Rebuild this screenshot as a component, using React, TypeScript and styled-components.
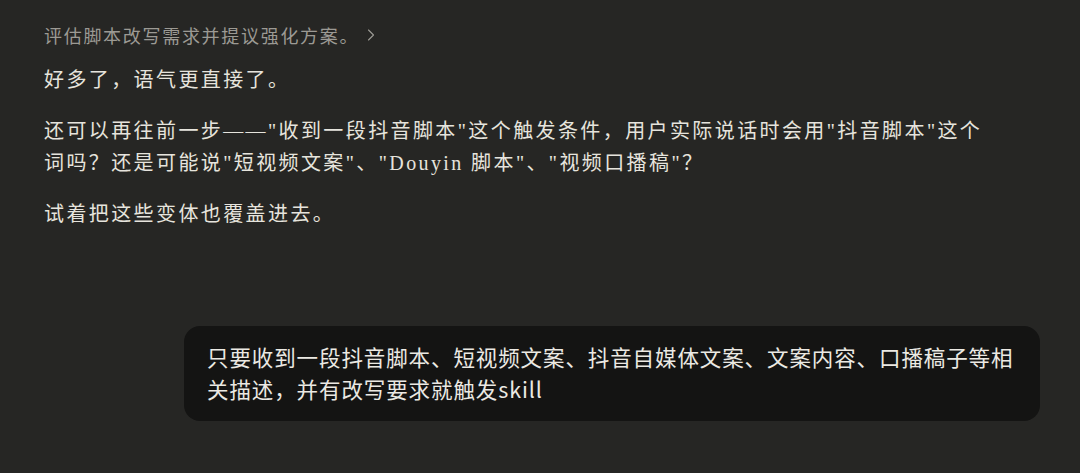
import React from 'react'
import styled, { createGlobalStyle } from 'styled-components'
import { ChevronRight } from 'lucide-react'

const GlobalStyle = createGlobalStyle`
  html, body {
    margin: 0;
    padding: 0;
    background: #262624;
  }
`

const Page = styled.div`
  width: 1080px;
  height: 473px;
  box-sizing: border-box;
  padding: 22px 40px 0 44px;
  display: flex;
  flex-direction: column;
  background: #262624;
  overflow: hidden;
`

const Summary = styled.div`
  display: flex;
  align-items: center;
  height: 26px;
  color: #9c9a94;
  font-family: 'Noto Sans CJK SC', sans-serif;
  font-size: 18px;
  letter-spacing: 1.7px;

  svg {
    flex: none;
    margin-left: 2px;
  }
`

const Reply = styled.div`
  margin-top: 16px;
  width: 944px;
  color: #e6e4dd;
  font-family: 'Liberation Serif', 'Noto Sans CJK SC', serif;
  font-size: 20px;
  letter-spacing: 2.4px;
  line-height: 32px;

  p {
    margin: 0 0 19px;
  }
`

const UserRow = styled.div`
  margin-top: 77px;
  display: flex;
  justify-content: flex-end;
`

const Bubble = styled.div`
  width: 856px;
  box-sizing: border-box;
  padding: 15px 20px 16px 23px;
  border-radius: 16px;
  background: #141413;
  color: #ebe9e3;
  font-family: 'Noto Sans CJK SC', sans-serif;
  font-size: 21.5px;
  letter-spacing: 0.9px;
  line-height: 32px;
`

export default function App() {
  return (
    <>
      <GlobalStyle />
      <Page>
        <Summary>
          评估脚本改写需求并提议强化方案。
          <ChevronRight size={20} strokeWidth={1.3} />
        </Summary>
        <Reply>
          <p>好多了，语气更直接了。</p>
          <p>
            还可以再往前一步——"收到一段抖音脚本"这个触发条件，用户实际说话时会用"抖音脚本"这个词吗？还是可能说"短视频文案"、"Douyin 脚本"、"视频口播稿"？
          </p>
          <p>试着把这些变体也覆盖进去。</p>
        </Reply>
        <UserRow>
          <Bubble>只要收到一段抖音脚本、短视频文案、抖音自媒体文案、文案内容、口播稿子等相关描述，并有改写要求就触发skill</Bubble>
        </UserRow>
      </Page>
    </>
  )
}
